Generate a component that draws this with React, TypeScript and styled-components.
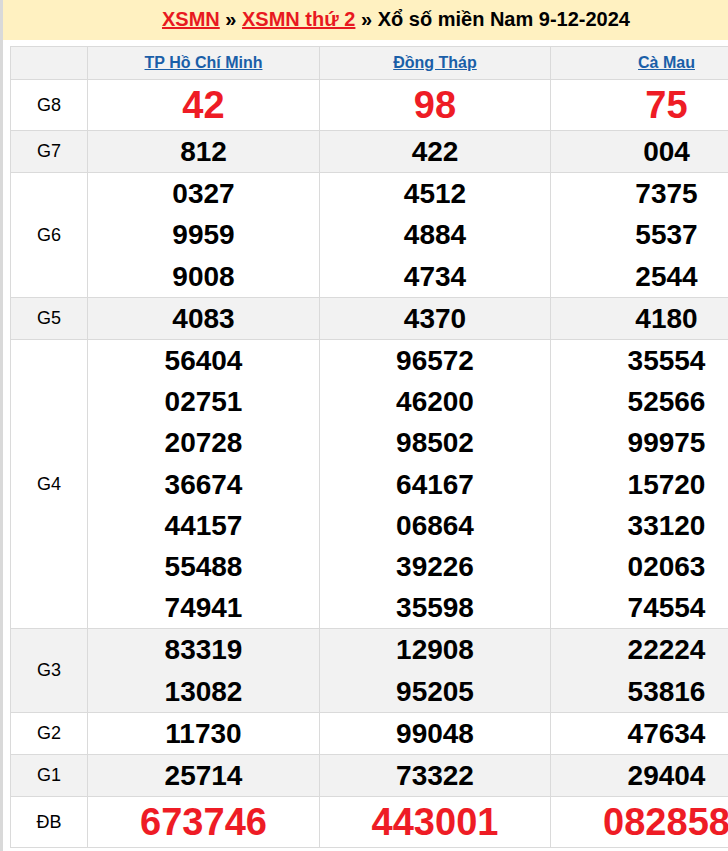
import React from "react";
import styled, { createGlobalStyle } from "styled-components";

const GlobalStyle = createGlobalStyle`
  html, body { margin: 0; padding: 0; background: #fff; overflow: hidden; }
  body { font-family: "Liberation Sans", Arial, sans-serif; }
`;

const Page = styled.div`
  width: 786px;
  min-height: 851px;
  border-left: 3px solid #d9d9d9;
  background: #fff;
`;

const TitleBar = styled.h2`
  margin: 0;
  height: 40px;
  line-height: 38px;
  background: #fff1c1;
  text-align: center;
  font-size: 20px;
  font-weight: bold;
  color: #000;
`;

const TitleLink = styled.a`
  color: #e8191f;
  text-decoration: underline;
`;

const TableWrap = styled.div`
  padding: 6px 0 0 7px;
`;

const Table = styled.table`
  border-collapse: collapse;
  table-layout: fixed;
  width: 772px;
  border: 1px solid #dadada;
  font-family: "Liberation Sans", Arial, sans-serif;
`;

const HeadCell = styled.th`
  background: #f2f2f2;
  height: 32px;
  padding: 0;
  border: 1px solid #dadada;
  font-size: 16px;
  font-weight: bold;
  text-align: center;
  vertical-align: middle;
`;

const ProvinceLink = styled.a`
  color: #1a5fa8;
  text-decoration: underline;
`;

const Row = styled.tr<{ $alt: boolean }>`
  background: ${(p) => (p.$alt ? "#f2f2f2" : "#fff")};
`;

const LabelCell = styled.td`
  border: 1px solid #dadada;
  padding: 0;
  text-align: center;
  vertical-align: middle;
  font-size: 18px;
  color: #000;
`;

const NumCell = styled.td`
  border: 1px solid #dadada;
  padding: 0;
  text-align: center;
  vertical-align: middle;
`;

const Num = styled.div<{ $big: boolean }>`
  font-weight: bold;
  font-size: ${(p) => (p.$big ? "38px" : "28px")};
  line-height: ${(p) => (p.$big ? "50px" : "41.2px")};
  color: ${(p) => (p.$big ? "#ee1c25" : "#000")};
`;

const provinces = ["TP Hồ Chí Minh", "Đồng Tháp", "Cà Mau"];

type Prize = { label: string; big?: boolean; values: string[][] };

const prizes: Prize[] = [
  { label: "G8", big: true, values: [["42"], ["98"], ["75"]] },
  { label: "G7", values: [["812"], ["422"], ["004"]] },
  {
    label: "G6",
    values: [
      ["0327", "9959", "9008"],
      ["4512", "4884", "4734"],
      ["7375", "5537", "2544"],
    ],
  },
  { label: "G5", values: [["4083"], ["4370"], ["4180"]] },
  {
    label: "G4",
    values: [
      ["56404", "02751", "20728", "36674", "44157", "55488", "74941"],
      ["96572", "46200", "98502", "64167", "06864", "39226", "35598"],
      ["35554", "52566", "99975", "15720", "33120", "02063", "74554"],
    ],
  },
  {
    label: "G3",
    values: [
      ["83319", "13082"],
      ["12908", "95205"],
      ["22224", "53816"],
    ],
  },
  { label: "G2", values: [["11730"], ["99048"], ["47634"]] },
  { label: "G1", values: [["25714"], ["73322"], ["29404"]] },
  { label: "ĐB", big: true, values: [["673746"], ["443001"], ["082858"]] },
];

export default function App() {
  return (
    <Page>
      <GlobalStyle />
      <TitleBar>
        <TitleLink href="#">XSMN</TitleLink> »{" "}
        <TitleLink href="#">XSMN thứ 2</TitleLink> » Xổ số miền Nam 9-12-2024
      </TitleBar>
      <TableWrap>
        <Table>
          <colgroup>
            <col style={{ width: 77 }} />
            <col style={{ width: 232 }} />
            <col style={{ width: 231 }} />
            <col style={{ width: 232 }} />
          </colgroup>
          <thead>
            <tr>
              <HeadCell />
              {provinces.map((p) => (
                <HeadCell key={p}>
                  <ProvinceLink href="#">{p}</ProvinceLink>
                </HeadCell>
              ))}
            </tr>
          </thead>
          <tbody>
            {prizes.map((prize, i) => (
              <Row key={prize.label} $alt={i % 2 === 1}>
                <LabelCell>{prize.label}</LabelCell>
                {prize.values.map((col, j) => (
                  <NumCell key={j}>
                    {col.map((v, k) => (
                      <Num key={k} $big={!!prize.big}>
                        {v}
                      </Num>
                    ))}
                  </NumCell>
                ))}
              </Row>
            ))}
          </tbody>
        </Table>
      </TableWrap>
    </Page>
  );
}
